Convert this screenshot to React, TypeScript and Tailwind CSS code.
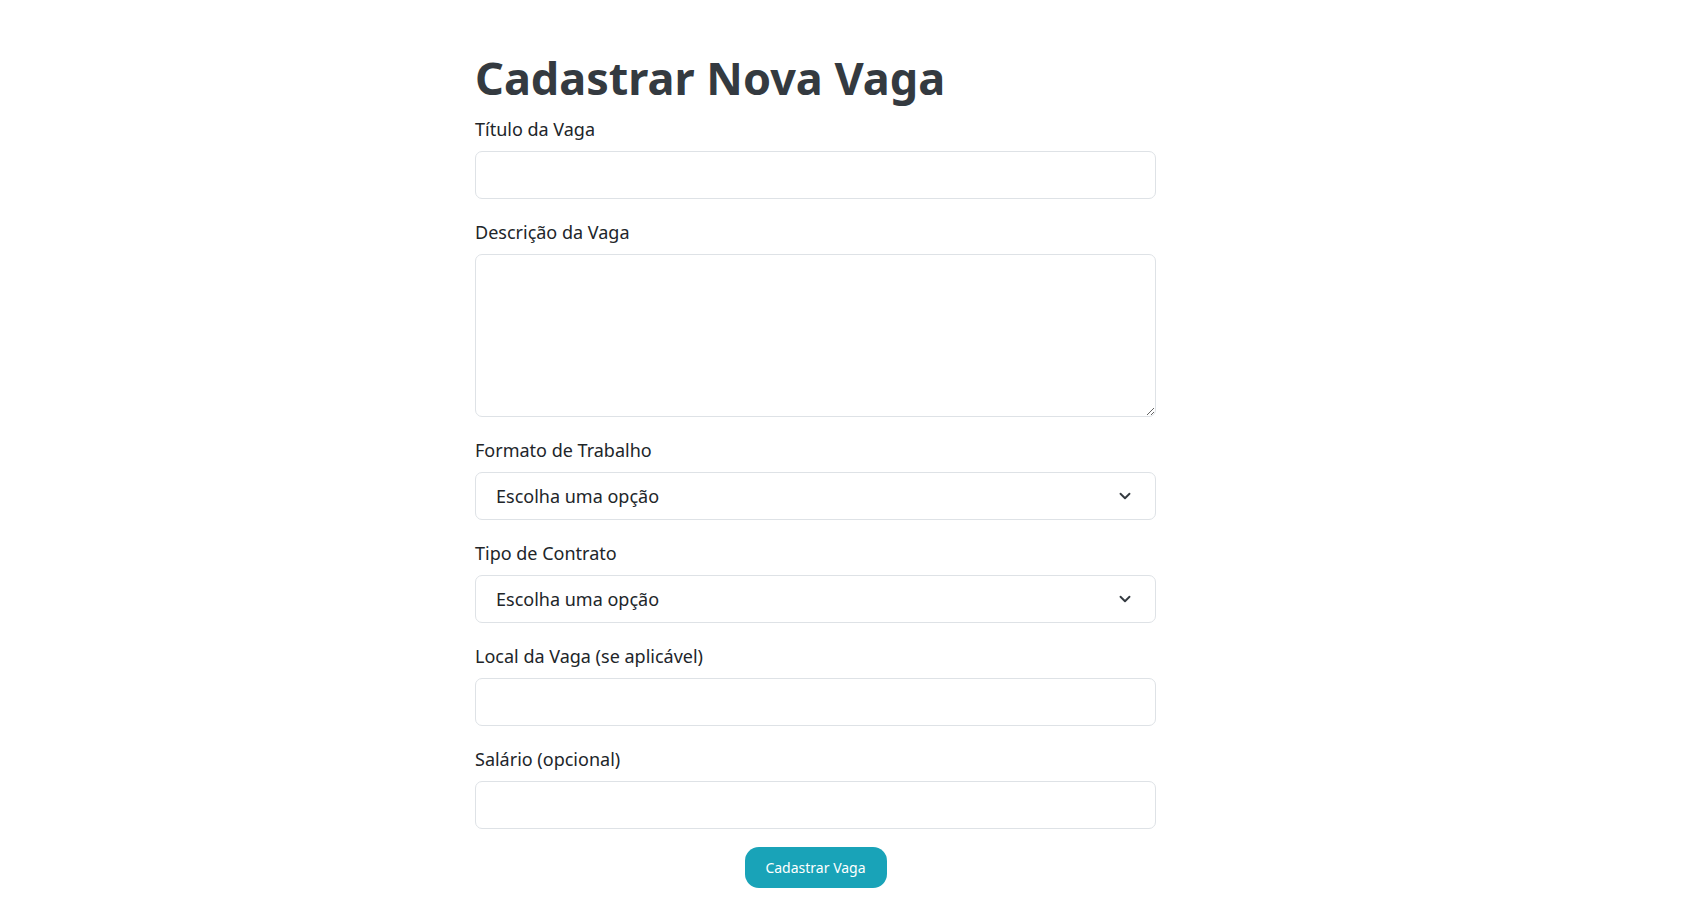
import { ChevronDown } from 'lucide-react'

const fieldClass =
  'h-[48px] w-full rounded-[7px] border border-[#dee2e6] bg-white px-5 text-[18px] text-[#212529] outline-none'

const Label = ({ children }: { children: string }) => (
  <label className="mb-[10px] block h-[30px] text-[18px] leading-[36px] text-[#212529]">
    {children}
  </label>
)

const Select = () => (
  <div className="relative">
    <select className={fieldClass + ' appearance-none'} defaultValue="">
      <option value="">Escolha uma opção</option>
    </select>
    <ChevronDown
      className="pointer-events-none absolute top-1/2 right-[22px] h-[18px] w-[18px] -translate-y-1/2 text-[#343a40]"
      strokeWidth={2.5}
    />
  </div>
)

export default function App() {
  return (
    <div className="min-h-screen bg-white pt-[41px] font-['Noto_Sans',sans-serif]">
      <form className="ml-[475px] w-[681px]">
        <h1 className="h-[70px] text-[45px] leading-[74px] font-bold text-[#343a40]">
          Cadastrar Nova Vaga
        </h1>
        <div className="mb-[15px]">
          <Label>Título da Vaga</Label>
          <input type="text" className={fieldClass} />
        </div>
        <div className="mb-[15px]">
          <Label>Descrição da Vaga</Label>
          <textarea className="block h-[163px] w-full rounded-[7px] border border-[#dee2e6] bg-white px-5 py-2 text-[18px] outline-none" />
        </div>
        <div className="mb-[15px]">
          <Label>Formato de Trabalho</Label>
          <Select />
        </div>
        <div className="mb-[15px]">
          <Label>Tipo de Contrato</Label>
          <Select />
        </div>
        <div className="mb-[15px]">
          <Label>Local da Vaga (se aplicável)</Label>
          <input type="text" className={fieldClass} />
        </div>
        <div className="mb-[18px]">
          <Label>Salário (opcional)</Label>
          <input type="text" className={fieldClass} />
        </div>
        <div className="flex justify-center">
          <button
            type="submit"
            className="h-[41px] w-[142px] rounded-[14px] bg-[#19a3b8] text-[14px] text-white">
            Cadastrar Vaga
          </button>
        </div>
      </form>
    </div>
  )
}
